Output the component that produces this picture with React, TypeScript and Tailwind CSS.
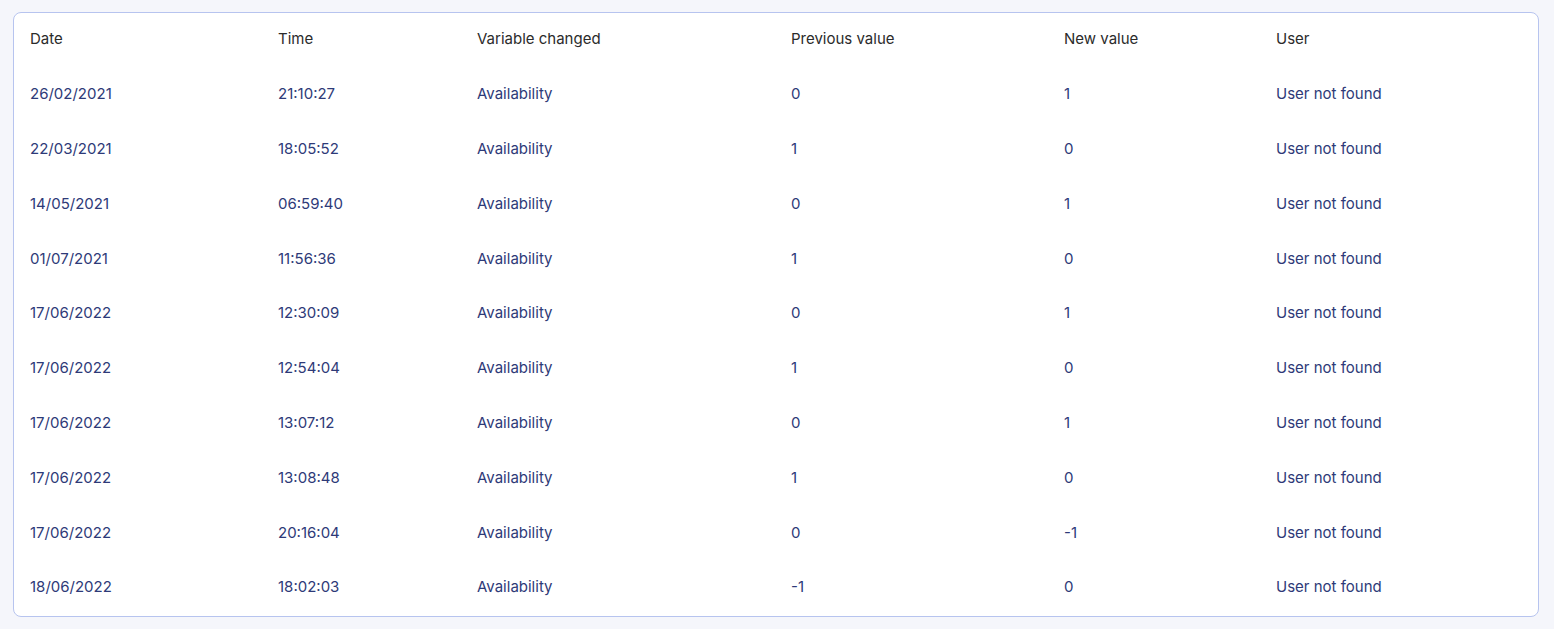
import React from 'react';

interface HistoryRow {
    date: string;
    time: string;
    variable: string;
    previous: string;
    next: string;
    user: string;
}

const rows: HistoryRow[] = [
    { date: '26/02/2021', time: '21:10:27', variable: 'Availability', previous: '0', next: '1', user: 'User not found' },
    { date: '22/03/2021', time: '18:05:52', variable: 'Availability', previous: '1', next: '0', user: 'User not found' },
    { date: '14/05/2021', time: '06:59:40', variable: 'Availability', previous: '0', next: '1', user: 'User not found' },
    { date: '01/07/2021', time: '11:56:36', variable: 'Availability', previous: '1', next: '0', user: 'User not found' },
    { date: '17/06/2022', time: '12:30:09', variable: 'Availability', previous: '0', next: '1', user: 'User not found' },
    { date: '17/06/2022', time: '12:54:04', variable: 'Availability', previous: '1', next: '0', user: 'User not found' },
    { date: '17/06/2022', time: '13:07:12', variable: 'Availability', previous: '0', next: '1', user: 'User not found' },
    { date: '17/06/2022', time: '13:08:48', variable: 'Availability', previous: '1', next: '0', user: 'User not found' },
    { date: '17/06/2022', time: '20:16:04', variable: 'Availability', previous: '0', next: '-1', user: 'User not found' },
    { date: '18/06/2022', time: '18:02:03', variable: 'Availability', previous: '-1', next: '0', user: 'User not found' },
];

const gridCols = 'grid grid-cols-[248px_199px_314px_273px_212px_1fr] items-center pl-[16px]';

const App: React.FC = () => {
    return (
        <div className="min-h-screen bg-[#f5f6fb] pt-3 pl-[13px] pr-[15px] font-['Inter',sans-serif] text-[15px]">
            <div className="bg-white border border-[#b7c4ef] rounded-lg">
                <div className={`${gridCols} pt-px h-[51px] text-[#2b2b2b]`}>
                    <span>Date</span>
                    <span>Time</span>
                    <span>Variable changed</span>
                    <span>Previous value</span>
                    <span>New value</span>
                    <span>User</span>
                </div>
                <div className="pt-[3px] pb-px">
                    {rows.map((row, i) => (
                        <div key={i} className={`${gridCols} h-[54.8px] text-[#2e3a78]`}>
                            <span>{row.date}</span>
                            <span>{row.time}</span>
                            <span>{row.variable}</span>
                            <span>{row.previous}</span>
                            <span>{row.next}</span>
                            <span>{row.user}</span>
                        </div>
                    ))}
                </div>
            </div>
        </div>
    );
};

export default App;
